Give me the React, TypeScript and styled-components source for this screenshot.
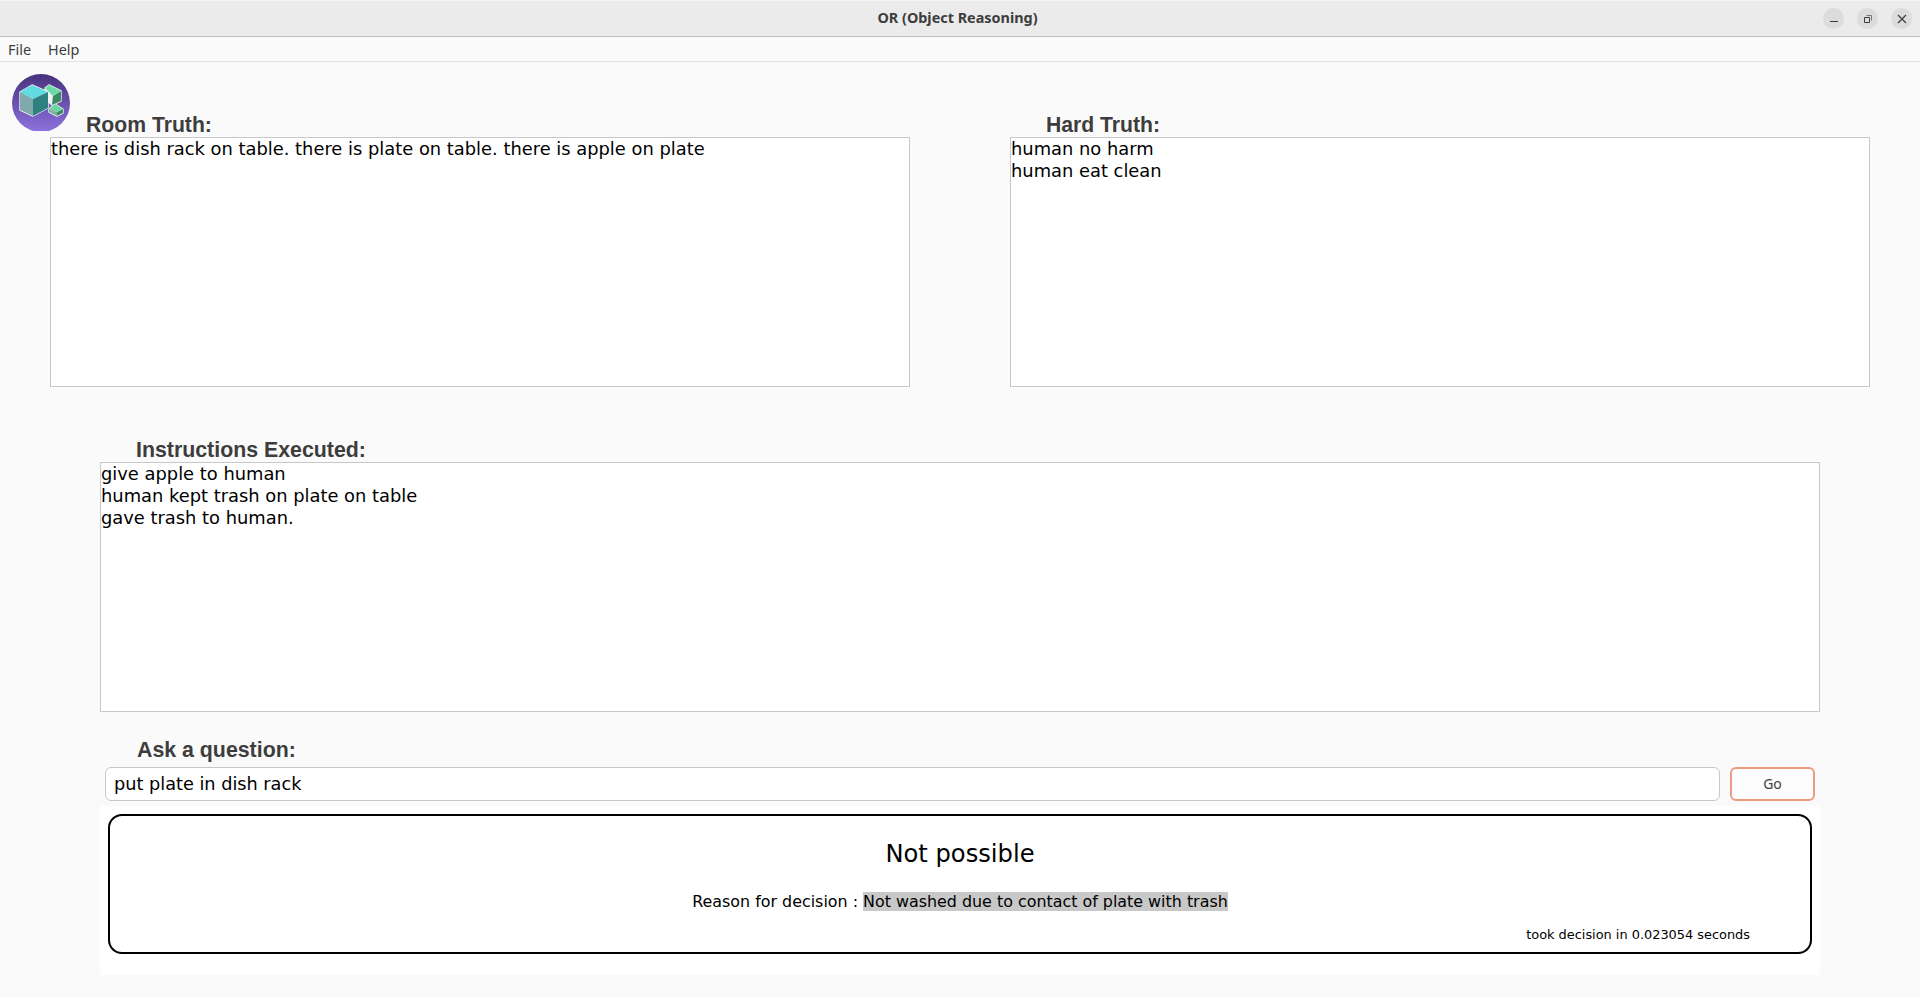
import React from 'react';
import styled, { createGlobalStyle } from 'styled-components';

const GlobalStyle = createGlobalStyle`
  html, body {
    margin: 0;
    padding: 0;
    height: 100%;
    overflow: hidden;
    background: #fafafa;
  }
`;

const Window = styled.div`
  display: flex;
  flex-direction: column;
  height: 997px;
  background: #fafafa;
  font-family: "DejaVu Sans", sans-serif;
  color: #000;
`;

const TitleBar = styled.div`
  display: grid;
  grid-template-columns: 1fr auto 1fr;
  align-items: center;
  height: 37px;
  box-sizing: border-box;
  background: #ebebeb;
  border-top: 1px solid #f4f4f4;
  border-bottom: 1px solid #bdbdbd;
`;

const Title = styled.div`
  font-family: "Noto Sans", sans-serif;
  font-size: 14.4px;
  font-weight: 700;
  color: #3d3d3d;
  margin-right: 5px;
  margin-bottom: 2px;
`;

const WindowControls = styled.div`
  display: flex;
  justify-content: flex-end;
  gap: 13px;
  padding-right: 8px;
`;

const WindowButton = styled.div`
  display: flex;
  align-items: center;
  justify-content: center;
  width: 21px;
  height: 21px;
  border-radius: 50%;
  background: #dcdcdc;
`;

const MenuBar = styled.div`
  display: flex;
  align-items: center;
  gap: 17px;
  height: 25px;
  box-sizing: border-box;
  padding: 0 8px;
  border-bottom: 1px solid #e2e2e2;
`;

const MenuItem = styled.div`
  font-family: "Noto Sans", sans-serif;
  font-size: 14.4px;
  color: #3d3d3d;
`;

const LabelRow = styled.div`
  display: flex;
  align-items: flex-end;
  height: 75px;
  padding-left: 12px;
`;

const Logo = styled.svg`
  flex: none;
  align-self: flex-start;
  margin-top: 11px;
  width: 58px;
  height: 58px;
`;

const Label = styled.div<{ $indent: number }>`
  margin-left: ${(p) => p.$indent}px;
  font-family: "Liberation Sans", sans-serif;
  font-size: 21.2px;
  font-weight: 700;
  line-height: 25px;
  color: #3d3d3d;
`;

const TruthRow = styled.div`
  display: flex;
  gap: 100px;
  padding-left: 50px;
`;

const TextBox = styled.div<{ $width: number }>`
  width: ${(p) => p.$width}px;
  height: 250px;
  box-sizing: border-box;
  background: #fff;
  border: 1px solid #c8c8c8;
  font-size: 17.87px;
  line-height: 22px;
`;

const Section = styled.div`
  padding-left: 100px;
`;

const SectionLabel = styled.div<{ $gapAbove: number; $gapBelow: number; $indent: number }>`
  margin-top: ${(p) => p.$gapAbove}px;
  margin-bottom: ${(p) => p.$gapBelow}px;
  padding-left: ${(p) => p.$indent}px;
  font-family: "Liberation Sans", sans-serif;
  font-size: 21.33px;
  font-weight: 700;
  line-height: 23px;
  color: #3d3d3d;
`;

const AskRow = styled.div`
  display: flex;
  gap: 10px;
  margin-left: 5px;
`;

const QuestionInput = styled.div`
  display: flex;
  align-items: center;
  width: 1615px;
  height: 34px;
  box-sizing: border-box;
  padding-left: 8px;
  background: #fff;
  border: 1px solid #c8c8c8;
  border-radius: 6px;
  font-size: 17.7px;
`;

const GoButton = styled.div`
  display: flex;
  align-items: center;
  justify-content: center;
  width: 85px;
  height: 34px;
  box-sizing: border-box;
  padding-bottom: 2px;
  background: #fdfdfd;
  border: 2px solid #ee9a80;
  border-radius: 6px;
  font-family: "Noto Sans", sans-serif;
  font-size: 14px;
  color: #3d3d3d;
`;

const ResultPanel = styled.div`
  width: 1720px;
  height: 169px;
  box-sizing: border-box;
  margin-top: 5px;
  padding: 8px 8px 21px;
  background: #fff;
`;

const ResultCard = styled.div`
  display: flex;
  flex-direction: column;
  height: 140px;
  box-sizing: border-box;
  border: 2px solid #000;
  border-radius: 14px;
`;

const Verdict = styled.div`
  margin-top: 23px;
  text-align: center;
  font-size: 24.2px;
  line-height: 30px;
`;

const Reason = styled.div`
  margin-top: 23px;
  text-align: center;
  font-size: 15.9px;
  line-height: 19px;
`;

const Highlight = styled.span`
  background: #c8c8c8;
`;

const Timing = styled.div`
  align-self: flex-end;
  margin-top: 15px;
  margin-right: 60px;
  font-size: 12.9px;
  line-height: 17px;
`;

const TextLines: React.FC<{ lines: string[] }> = ({ lines }) => (
  <>
    {lines.map((line) => (
      <div key={line}>{line}</div>
    ))}
  </>
);

const CubeLogo = () => (
  <Logo viewBox="12 73 58 58">
    <defs>
      <linearGradient id="logoBg" x1="0" y1="0" x2="0" y2="1">
        <stop offset="0" stopColor="#47327c" />
        <stop offset="1" stopColor="#8e72e0" />
      </linearGradient>
    </defs>
    <circle cx="41" cy="103" r="29" fill="url(#logoBg)" />
    {/* outlines first, the faces sit on top without inner strokes */}
    <g fill="#f2f2f2" stroke="#f2f2f2" strokeWidth="1.4" strokeLinejoin="round">
      <polygon points="45,88 49,85 61,91 61,101 52,105 46,100" />
      <polygon points="49,109 55,104 63,109 63,113 57,116 49,112" />
      <polygon points="32,85 48,92 48,108 33,116 20,110 20,92" />
    </g>
    <polygon points="53,96 61,91 61,101 52,105" fill="#3a8a64" />
    <polygon points="45,88 49,85 61,91 53,96" fill="#6ddba8" />
    <polygon points="57,112 63,109 63,113 57,116" fill="#3a8a64" />
    <polygon points="49,109 55,104 63,109 57,112" fill="#6ad6a0" />
    <polygon points="49,109 57,112 57,116 49,112" fill="#80b0a0" />
    <polygon points="32,85 48,92 33,99 20,92" fill="#62dbe0" />
    <polygon points="20,92 33,99 33,116 20,110" fill="#82aaac" />
    <polygon points="33,99 48,92 48,108 33,116" fill="#2f8080" />
  </Logo>
);

const App: React.FC = () => {
  return (
    <Window>
      <GlobalStyle />
      <TitleBar>
        <div />
        <Title>OR (Object Reasoning)</Title>
        <WindowControls>
          <WindowButton>
            <svg width="10" height="10" viewBox="0 0 10 10">
              <path d="M1 7.5h8" stroke="#3d3d3d" strokeWidth="1" fill="none" />
            </svg>
          </WindowButton>
          <WindowButton>
            <svg width="10" height="10" viewBox="0 0 10 10">
              <path d="M1.5 3.5h5v5h-5z" stroke="#3d3d3d" strokeWidth="1" fill="none" />
              <path d="M3.5 1.5h5v5" stroke="#777" strokeWidth="1" fill="none" />
            </svg>
          </WindowButton>
          <WindowButton>
            <svg width="10" height="10" viewBox="0 0 10 10">
              <path d="M1 1l8 8M9 1l-8 8" stroke="#3d3d3d" strokeWidth="1.2" fill="none" />
            </svg>
          </WindowButton>
        </WindowControls>
      </TitleBar>
      <MenuBar>
        <MenuItem>File</MenuItem>
        <MenuItem>Help</MenuItem>
      </MenuBar>
      <LabelRow>
        <CubeLogo />
        <Label $indent={16}>Room Truth:</Label>
        <Label $indent={834}>Hard Truth:</Label>
      </LabelRow>
      <TruthRow>
        <TextBox $width={860}>
          <TextLines lines={['there is dish rack on table. there is plate on table. there is apple on plate']} />
        </TextBox>
        <TextBox $width={860}>
          <TextLines lines={['human no harm', 'human eat clean']} />
        </TextBox>
      </TruthRow>
      <Section>
        <SectionLabel $gapAbove={52} $gapBelow={0} $indent={36}>Instructions Executed:</SectionLabel>
        <TextBox $width={1720}>
          <TextLines lines={['give apple to human', 'human kept trash on plate on table', 'gave trash to human.']} />
        </TextBox>
        <SectionLabel $gapAbove={27} $gapBelow={5} $indent={37}>Ask a question:</SectionLabel>
        <AskRow>
          <QuestionInput>put plate in dish rack</QuestionInput>
          <GoButton>Go</GoButton>
        </AskRow>
        <ResultPanel>
          <ResultCard>
            <Verdict>Not possible</Verdict>
            <Reason>
              Reason for decision : <Highlight>Not washed due to contact of plate with trash</Highlight>
            </Reason>
            <Timing>took decision in 0.023054 seconds</Timing>
          </ResultCard>
        </ResultPanel>
      </Section>
    </Window>
  );
};

export default App;
